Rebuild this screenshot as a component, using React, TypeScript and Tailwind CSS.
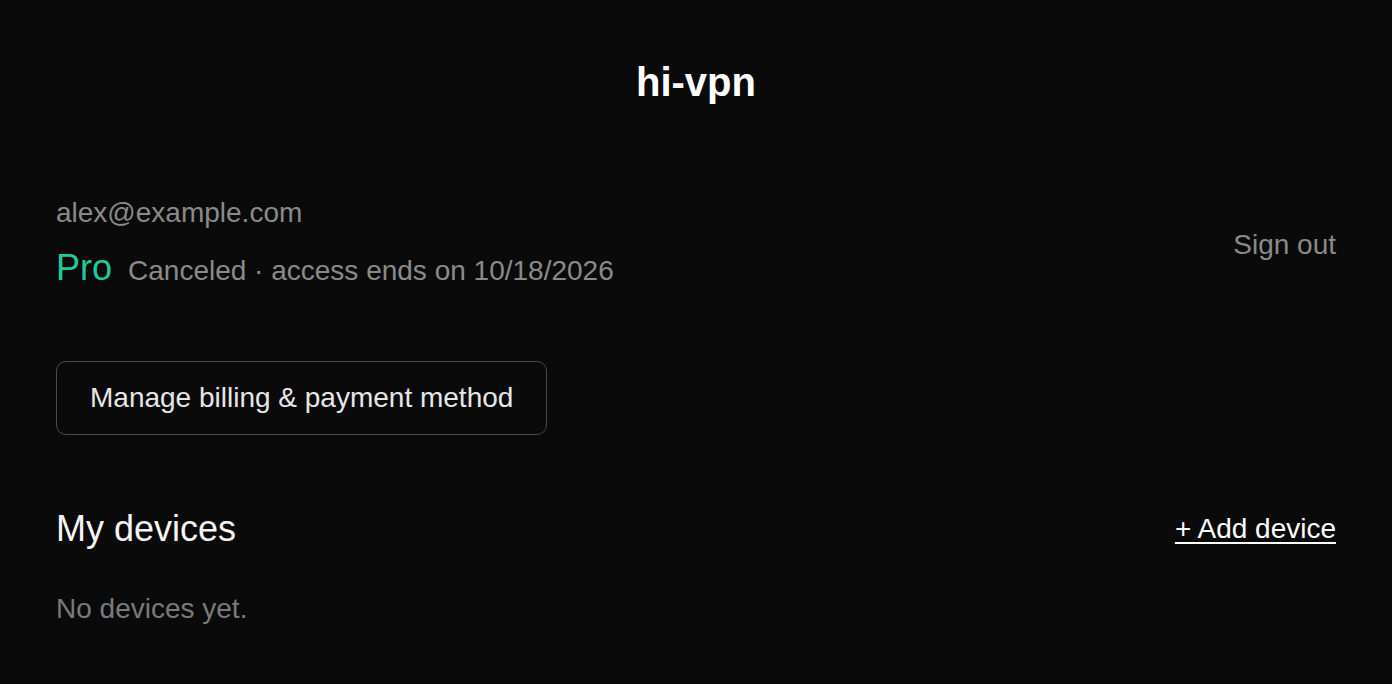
import React from 'react';

function AccountPage() {
  return (
    <div
      className="min-h-screen w-full bg-[#0b0a0b] px-14 pt-14 pb-16 text-[#f2f2f2]"
      style={{ fontFamily: '"Liberation Sans", Arial, sans-serif' }}
    >
      <h1 className="text-center text-[40px] font-bold leading-[52px] text-white">hi-vpn</h1>

      <div className="mt-[87px] flex items-center justify-between">
        <div className="flex flex-col">
          <p className="text-[28px] leading-[36px] text-[#8a8a8a]">alex@example.com</p>
          <div className="mt-[15px] flex items-baseline gap-4">
            <span className="text-[36px] leading-[44px] text-[#20c997]">Pro</span>
            <span className="text-[28px] leading-[36px] text-[#8a8a8a]">
              Canceled · access ends on 10/18/2026
            </span>
          </div>
        </div>
        <button className="pt-1 text-[28px] leading-[36px] text-[#8a8a8a]">Sign out</button>
      </div>

      <button className="mt-[71px] rounded-[10px] border border-[#4a4a4a] px-[33px] py-[18px] text-[28px] leading-[36px] text-[#e6e6e6]">
        Manage billing &amp; payment method
      </button>

      <div className="mt-[72px] flex items-center justify-between">
        <h2 className="text-[36px] leading-[44px] text-[#f5f5f5]">My devices</h2>
        <a href="#" className="text-[28px] leading-[36px] text-white underline underline-offset-4">
          + Add device
        </a>
      </div>

      <p className="mt-10 text-[28px] leading-[36px] text-[#7a7a7a]">No devices yet.</p>
    </div>
  );
}

export default function App() {
  return <AccountPage />;
}
